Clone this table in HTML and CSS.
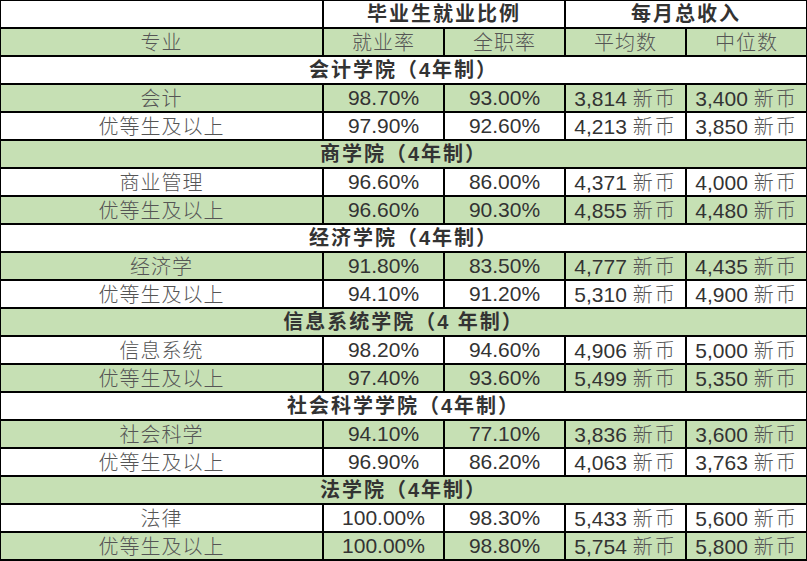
FILE: index.html
```html
<!DOCTYPE html>
<html lang="zh">
<head>
<meta charset="utf-8">
<link rel="stylesheet" href="styles.css">
</head>
<body>
<table class="grid">
  <colgroup>
    <col class="c-major"><col class="c-num"><col class="c-num"><col class="c-num"><col class="c-num">
  </colgroup>
  <tbody>
    <tr class="w"><td></td><th colspan="2">毕业生就业比例</th><th colspan="2">每月总收入</th></tr>
    <tr class="g"><td class="cn">专业</td><td class="cn">就业率</td><td class="cn">全职率</td><td class="cn">平均数</td><td class="cn">中位数</td></tr>

    <tr class="w"><th colspan="5">会计学院（4年制）</th></tr>
    <tr class="g"><td class="cn">会计</td><td>98.70%</td><td>93.00%</td><td>3,814 <span class="u">新币</span></td><td>3,400 <span class="u">新币</span></td></tr>
    <tr class="w"><td class="cn">优等生及以上</td><td>97.90%</td><td>92.60%</td><td>4,213 <span class="u">新币</span></td><td>3,850 <span class="u">新币</span></td></tr>

    <tr class="g"><th colspan="5">商学院（4年制）</th></tr>
    <tr class="w"><td class="cn">商业管理</td><td>96.60%</td><td>86.00%</td><td>4,371 <span class="u">新币</span></td><td>4,000 <span class="u">新币</span></td></tr>
    <tr class="g"><td class="cn">优等生及以上</td><td>96.60%</td><td>90.30%</td><td>4,855 <span class="u">新币</span></td><td>4,480 <span class="u">新币</span></td></tr>

    <tr class="w"><th colspan="5">经济学院（4年制）</th></tr>
    <tr class="g"><td class="cn">经济学</td><td>91.80%</td><td>83.50%</td><td>4,777 <span class="u">新币</span></td><td>4,435 <span class="u">新币</span></td></tr>
    <tr class="w"><td class="cn">优等生及以上</td><td>94.10%</td><td>91.20%</td><td>5,310 <span class="u">新币</span></td><td>4,900 <span class="u">新币</span></td></tr>

    <tr class="g"><th colspan="5">信息系统学院（4 年制）</th></tr>
    <tr class="w"><td class="cn">信息系统</td><td>98.20%</td><td>94.60%</td><td>4,906 <span class="u">新币</span></td><td>5,000 <span class="u">新币</span></td></tr>
    <tr class="g"><td class="cn">优等生及以上</td><td>97.40%</td><td>93.60%</td><td>5,499 <span class="u">新币</span></td><td>5,350 <span class="u">新币</span></td></tr>

    <tr class="w"><th colspan="5">社会科学学院（4年制）</th></tr>
    <tr class="g"><td class="cn">社会科学</td><td>94.10%</td><td>77.10%</td><td>3,836 <span class="u">新币</span></td><td>3,600 <span class="u">新币</span></td></tr>
    <tr class="w"><td class="cn">优等生及以上</td><td>96.90%</td><td>86.20%</td><td>4,063 <span class="u">新币</span></td><td>3,763 <span class="u">新币</span></td></tr>

    <tr class="g"><th colspan="5">法学院（4年制）</th></tr>
    <tr class="w"><td class="cn">法律</td><td>100.00%</td><td>98.30%</td><td>5,433 <span class="u">新币</span></td><td>5,600 <span class="u">新币</span></td></tr>
    <tr class="g"><td class="cn">优等生及以上</td><td>100.00%</td><td>98.80%</td><td>5,754 <span class="u">新币</span></td><td>5,800 <span class="u">新币</span></td></tr>
  </tbody>
</table>
</body>
</html>
```
FILE: styles.css
```css
html, body {
  margin: 0;
  padding: 0;
  background: #ffffff;
}

.grid {
  border-collapse: collapse;
  table-layout: fixed;
  width: 808px;
  margin: -1px 0 0 -1px;
  font-family: "Liberation Sans", Arial, "Noto Sans CJK SC", sans-serif;
  font-size: 21px;
  color: #333;
}

.c-major { width: 323px; }
.c-num { width: 121px; }

.grid td,
.grid th {
  border: 2px solid #000;
  height: 26px;
  padding: 0;
  text-align: center;
  vertical-align: middle;
  line-height: 24px;
  white-space: nowrap;
  overflow: hidden;
}

.grid th {
  font-family: "Liberation Sans", Arial, "Noto Sans CJK SC", sans-serif;
  font-weight: bold;
  font-size: 20px;
  letter-spacing: 2px;
  color: #333;
}

.grid .cn {
  font-family: "Noto Sans CJK SC", sans-serif;
  font-size: 20px;
  font-weight: 300;
  letter-spacing: 1px;
  color: #555;
}

.u {
  font-family: "Noto Sans CJK SC", sans-serif;
  font-size: 20px;
  font-weight: 300;
  letter-spacing: 2px;
  color: #555;
}

.w { background: #ffffff; }
.g { background: #c6e0b4; }
```
